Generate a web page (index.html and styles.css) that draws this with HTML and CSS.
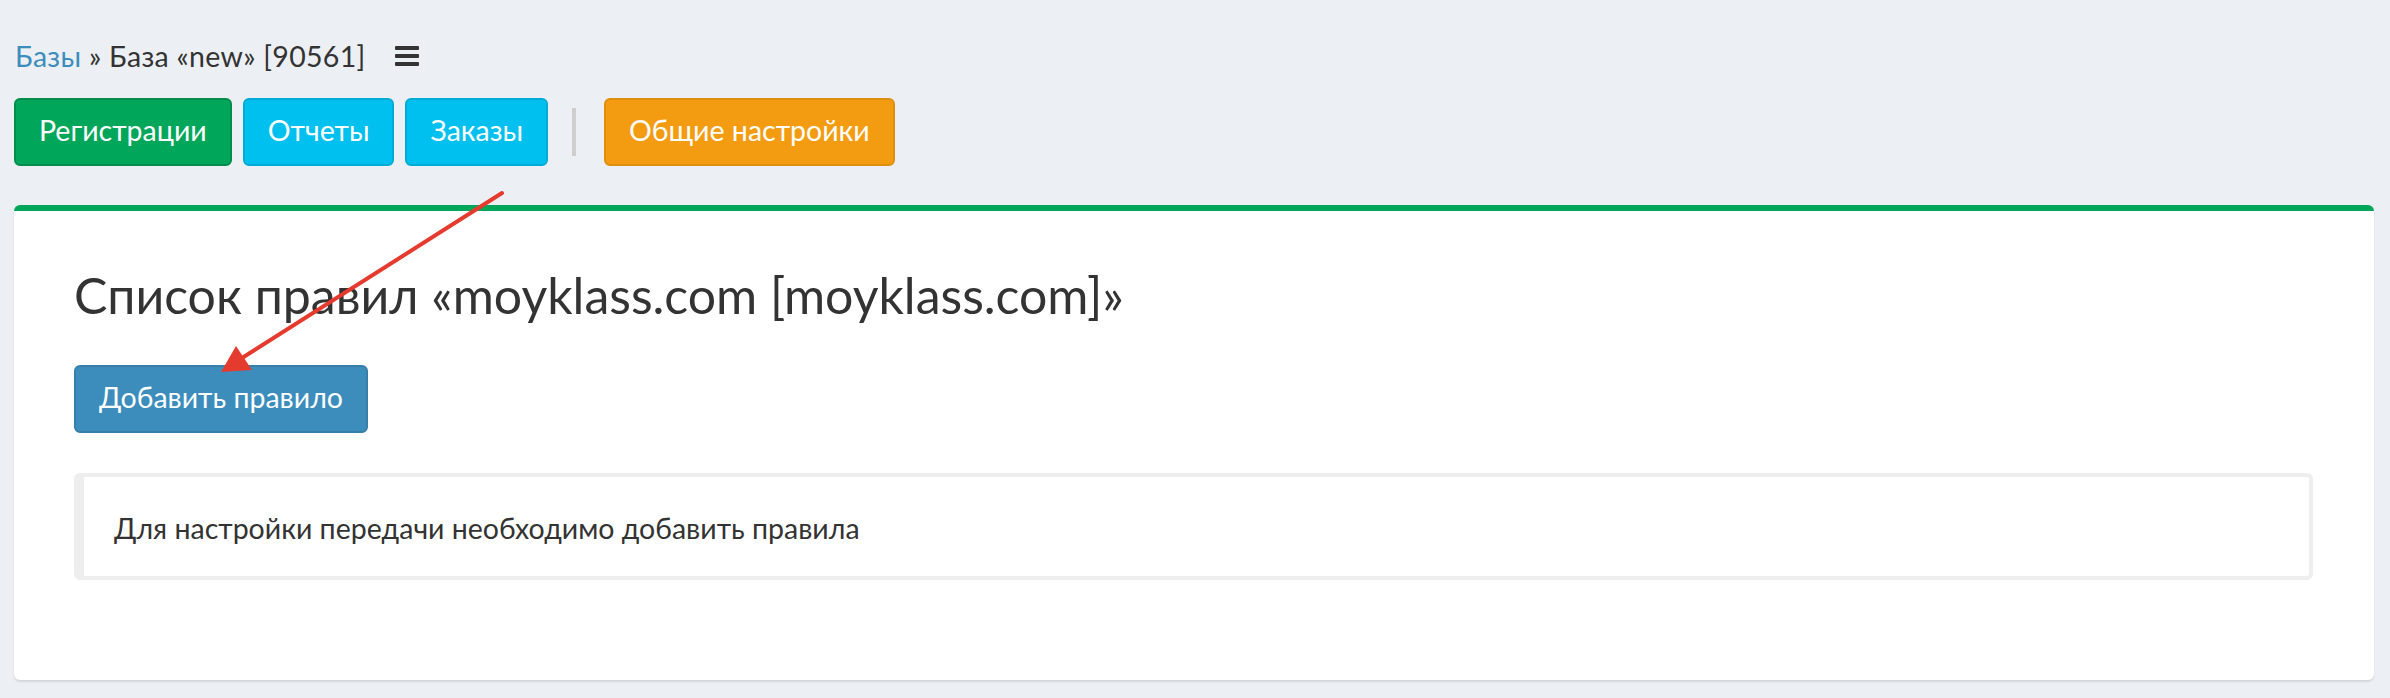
FILE: index.html
```html
<!DOCTYPE html>
<html lang="ru">
<head>
<meta charset="utf-8">
<title>Список правил</title>
<link rel="stylesheet" href="styles.css">
</head>
<body>
<div class="page">
  <div class="crumbs">
    <span class="crumb-text"><a class="crumb-link" href="#">Базы</a> » База «new» [90561]</span>
    <span class="burger" aria-label="меню"><i></i><i></i><i></i></span>
  </div>
  <div class="toolbar">
    <a class="btn btn-success" href="#">Регистрации</a>
    <a class="btn btn-info" href="#">Отчеты</a>
    <a class="btn btn-info" href="#">Заказы</a>
    <span class="sep"></span>
    <a class="btn btn-warning" href="#">Общие настройки</a>
  </div>
  <div class="box">
    <h2 class="box-title">Список правил «moyklass.com [moyklass.com]»</h2>
    <a class="btn btn-primary" href="#">Добавить правило</a>
    <div class="callout">Для настройки передачи необходимо добавить правила</div>
  </div>
</div>
<svg class="arrow" width="2390" height="698" viewBox="0 0 2390 698">
  <line x1="502" y1="193" x2="242" y2="358" stroke="#e53b2f" stroke-width="4" stroke-linecap="round"/>
  <polygon points="221,372 236,346 252,370" fill="#e53b2f"/>
</svg>
</body>
</html>
```
FILE: styles.css
```css
* { box-sizing: border-box; }
html, body { margin: 0; padding: 0; }
body {
  background: #ecf0f5;
  color: #333;
  font-family: Lato, "Open Sans", sans-serif;
  font-size: 28.5px;
  line-height: 40px;
  width: 2390px;
  height: 698px;
  overflow: hidden;
}
.page { padding: 36px 16px 0 14px; }
.crumbs { display: flex; align-items: center; height: 40px; padding-left: 1px; }
.crumb-text { white-space: nowrap; letter-spacing: 0.3px; }
.crumb-link { color: #3c8dbc; text-decoration: none; }
.burger { display: flex; flex-direction: column; gap: 4px; margin-left: 29px; width: 24px; }
.burger i { display: block; height: 4px; background: #333; border-radius: 1px; }
.toolbar { display: flex; align-items: center; gap: 11px; margin-top: 22px; }
.btn {
  display: inline-block;
  padding: 10px 23px 14px;
  border: 2px solid transparent;
  border-radius: 6px;
  color: #fff;
  text-decoration: none;
  font-size: 28.5px;
  line-height: 40px;
  white-space: nowrap;
}
.btn-success { background: #00a65a; border-color: #008d4c; }
.btn-info { background: #00c0ef; border-color: #00acd6; }
.btn-warning { background: #f39c12; border-color: #e08e0b; }
.btn-primary { background: #3c8dbc; border-color: #367fa9; }
.sep { width: 4px; height: 48px; background: #cfcfcf; margin: 0 17px 0 13px; }
.box {
  margin-top: 39px;
  background: #fff;
  border-top: 6px solid #00a65a;
  border-radius: 6px;
  box-shadow: 0 2px 2px rgba(0,0,0,0.1);
  padding: 54px 61px 100px 60px;
  display: flex;
  flex-direction: column;
  align-items: flex-start;
}
.box-title { margin: 0 0 40px; font-size: 50px; line-height: 60px; font-weight: 400; color: #333; }
.callout {
  align-self: stretch;
  margin-top: 40px;
  border: 4px solid #eee;
  border-left-width: 10px;
  border-radius: 6px;
  padding: 31px 30px 28px 30px;
  line-height: 40px;
}
.arrow { position: absolute; left: 0; top: 0; pointer-events: none; }
```
